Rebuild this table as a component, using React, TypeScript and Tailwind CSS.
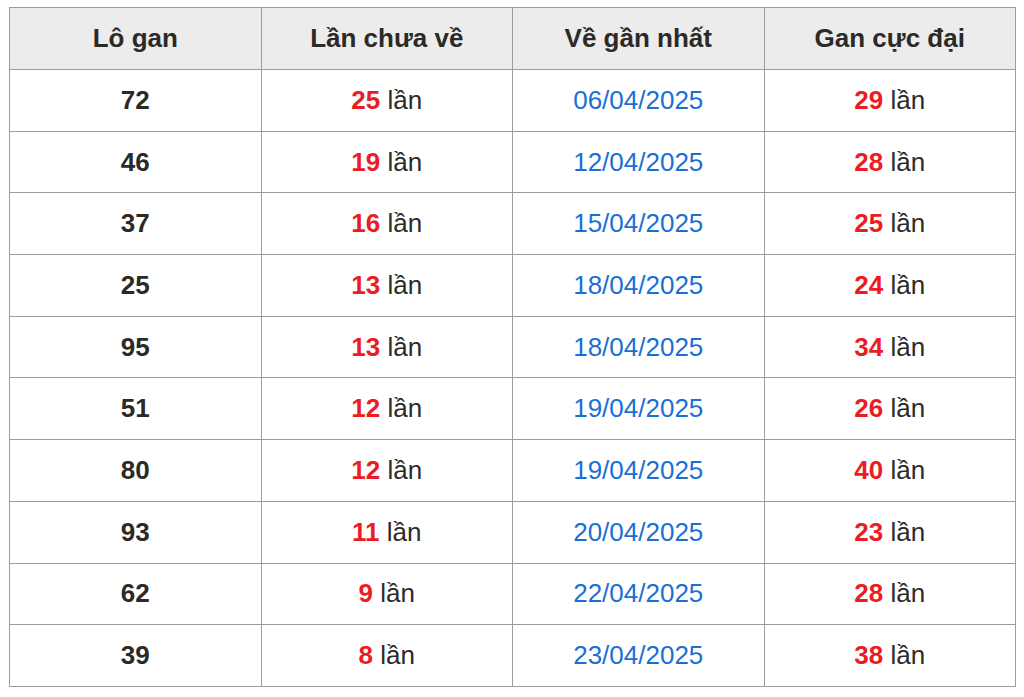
const rows = [
  { lo: "72", chua: 25, ve: "06/04/2025", max: 29 },
  { lo: "46", chua: 19, ve: "12/04/2025", max: 28 },
  { lo: "37", chua: 16, ve: "15/04/2025", max: 25 },
  { lo: "25", chua: 13, ve: "18/04/2025", max: 24 },
  { lo: "95", chua: 13, ve: "18/04/2025", max: 34 },
  { lo: "51", chua: 12, ve: "19/04/2025", max: 26 },
  { lo: "80", chua: 12, ve: "19/04/2025", max: 40 },
  { lo: "93", chua: 11, ve: "20/04/2025", max: 23 },
  { lo: "62", chua: 9, ve: "22/04/2025", max: 28 },
  { lo: "39", chua: 8, ve: "23/04/2025", max: 38 },
];

const headers = ["Lô gan", "Lần chưa về", "Về gần nhất", "Gan cực đại"];

const Lan = ({ n }: { n: number }) => (
  <>
    <span className="font-bold text-[#ec1c24]">{n}</span>
    <span className="text-[#2b2b2b]"> lần</span>
  </>
);

export default function App() {
  return (
    <div className="bg-white min-h-[697px] pt-[7px] pl-[9px] font-['Liberation_Sans',Arial,sans-serif]">
      <table className="w-[1007px] border-collapse table-fixed text-[26px] text-[#2b2a26]">
        <thead>
          <tr className="h-[62px] bg-[#ececec]">
            {headers.map((h) => (
              <th key={h} className="border border-[#9c9c9c] font-bold text-center align-middle">
                {h}
              </th>
            ))}
          </tr>
        </thead>
        <tbody>
          {rows.map((r, i) => (
            <tr key={i} className="h-[61.7px]">
              <td className="border border-[#9c9c9c] text-center font-bold">{r.lo}</td>
              <td className="border border-[#9c9c9c] text-center">
                <Lan n={r.chua} />
              </td>
              <td className="border border-[#9c9c9c] text-center text-[#1a6fd6]">{r.ve}</td>
              <td className="border border-[#9c9c9c] text-center">
                <Lan n={r.max} />
              </td>
            </tr>
          ))}
        </tbody>
      </table>
    </div>
  );
}
